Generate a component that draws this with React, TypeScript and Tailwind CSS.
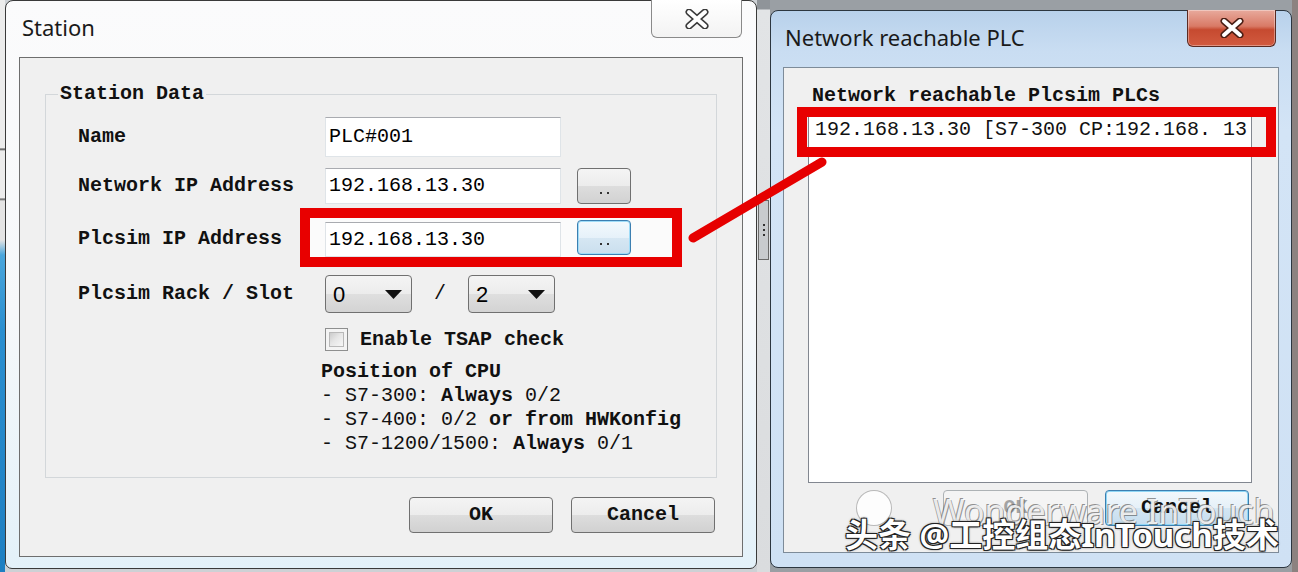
import React from 'react'

const mono = "font-['Liberation_Mono',monospace]"

function XGlyph({ dark }: { dark: string }) {
    return (
        <svg width="24" height="20" viewBox="0 0 24 20">
            <path d="M4 3 L20 17 M20 3 L4 17" stroke={dark} strokeWidth="7" strokeLinecap="round" />
            <path d="M4 3 L20 17 M20 3 L4 17" stroke="#ffffff" strokeWidth="4" strokeLinecap="round" />
        </svg>
    )
}

function TextBox({ value, h, mt = 0 }: { value: string; h: number; mt?: number }) {
    return (
        <div
            className="w-[236px] shrink-0 bg-white border border-[#dfe4e8] border-t-[#a9abb0] flex items-center pl-[3px] text-[20px] text-black"
            style={{ height: h, marginTop: mt }}
        >
            {value}
        </div>
    )
}

function DotsButton({ focused }: { focused?: boolean }) {
    return (
        <div
            className={
                focused
                    ? "ml-[16px] w-[54px] h-[35px] rounded-[4px] border border-[#3c7fb1] shadow-[inset_0_0_0_1px_#9fdcf8] bg-[linear-gradient(to_bottom,#f3f9fd_0%,#e6f1f9_50%,#d6e7f3_51%,#cadfee_100%)] flex items-end justify-center pb-[9px]"
                    : "ml-[16px] w-[54px] h-[36px] rounded-[4px] border border-[#707070] bg-[linear-gradient(to_bottom,#f4f4f4_0%,#ececec_50%,#dddddd_51%,#d2d2d2_100%)] flex items-end justify-center pb-[9px]"
            }
        >
            <span className="flex gap-[5px]">
                <span className="w-[2px] h-[2px] bg-[#333]" />
                <span className="w-[2px] h-[2px] bg-[#333]" />
            </span>
        </div>
    )
}

function Combo({ value }: { value: string }) {
    return (
        <div className="w-[87px] h-[38px] shrink-0 rounded-[4px] border border-[#707070] bg-[linear-gradient(to_bottom,#f4f4f4_0%,#ececec_50%,#dfdfdf_51%,#d3d3d3_100%)] flex items-center justify-between pl-[7px] pr-[9px]">
            <span className="font-['Liberation_Sans',sans-serif] text-[22px] text-black">{value}</span>
            <svg width="17" height="9" viewBox="0 0 17 9">
                <path d="M0 0 H17 L8.5 9 Z" fill="#111" />
            </svg>
        </div>
    )
}

function Label({ children }: { children: React.ReactNode }) {
    return <div className="w-[247px] shrink-0 self-center font-bold text-[20px] leading-[24px] text-[#111]">{children}</div>
}

function WinButton({ children, className }: { children: React.ReactNode; className: string }) {
    return (
        <div className={"h-[36px] rounded-[4px] flex items-center justify-center font-bold text-[20px] " + className}>
            {children}
        </div>
    )
}

export default function App() {
    return (
        <div className={"relative w-[1298px] h-[572px] overflow-hidden flex bg-[#cdd1d5] " + mono}>
            {/* desktop behind, left edge */}
            <div className="w-[5px] shrink-0 h-full bg-[linear-gradient(to_bottom,#ececec_0px,#ececec_148px,#444_149px,#ececec_151px,#ececec_198px,#555_199px,#e4e4e4_201px,#e4e4e4_240px,#4aa6dc_255px,#2b8fd0_330px,#1d7fc2_100%)]" />

            {/* Station dialog */}
            <div className="relative w-[752px] h-[569px] shrink-0 rounded-t-[8px] rounded-b-[7px] border border-[#3a3a3a] bg-[linear-gradient(to_right,rgba(110,205,240,0)_0px,rgba(110,205,240,0)_14px,rgba(110,205,240,0)_100%),linear-gradient(to_bottom,#fbfbfc_0%,#f6f8fa_55%,#e3f1f9_100%)] flex flex-col px-[13px] pb-[11px]">
                <div className="h-[56px] flex items-start justify-between">
                    <span className="mt-[12px] ml-[3px] font-['Noto_Sans',sans-serif] text-[22px] leading-[28px] text-[#1a1a1a]">Station</span>
                    <div className="-mt-px mr-px w-[91px] h-[38px] rounded-b-[6px] border border-t-0 border-[#8a8a8a] bg-[linear-gradient(to_bottom,#ffffff,#f3f3f3)] flex items-center justify-center">
                        <XGlyph dark="#3a3a3a" />
                    </div>
                </div>

                <div className="flex-1 border border-[#6e6e6e] bg-[#f0f0f0] flex flex-col">
                    <fieldset className="ml-[25px] mt-[24px] w-[672px] h-[396px] border border-[#d3d7da]">
                        <legend className="ml-[12px] px-[2px] font-bold text-[20px] leading-[24px] text-[#111]">Station Data</legend>
                        <div className="pl-[32px] flex flex-col">
                            <div className="mt-[11px] h-[40px] flex">
                                <Label>Name</Label>
                                <TextBox value="PLC#001" h={40} />
                            </div>
                            <div className="mt-[11px] h-[36px] flex">
                                <Label>Network IP Address</Label>
                                <TextBox value="192.168.13.30" h={36} />
                                <DotsButton />
                            </div>
                            <div className="relative isolate mt-[16px] h-[37px] flex items-start">
                                <div className="absolute left-[222px] -top-[12px] w-[382px] h-[59px] border-[10px] border-[#e80000] bg-[#fbfbfb] -z-10" />
                                <Label>Plcsim IP Address</Label>
                                <TextBox value="192.168.13.30" h={35} mt={2} />
                                <DotsButton focused />
                            </div>
                            <div className="mt-[18px] h-[38px] flex items-center">
                                <Label>Plcsim Rack / Slot</Label>
                                <Combo value="0" />
                                <span className="w-[56px] text-center text-[20px] text-[#111]">/</span>
                                <Combo value="2" />
                            </div>
                            <div className="mt-[15px] h-[23px] flex items-center pl-[247px]">
                                <div className="w-[23px] h-[23px] border border-[#8e8f8f] bg-[#f4f4f4] p-[3px]">
                                    <div className="w-full h-full border border-[#b9b9b9] bg-[linear-gradient(135deg,#cbcbcb_0%,#e6e6e6_45%,#f7f7f7_100%)]" />
                                </div>
                                <span className="ml-[12px] font-bold text-[20px] text-[#111]">Enable TSAP check</span>
                            </div>
                            <div className="ml-[243px] mt-[9px] text-[20px] leading-[24px] text-[#111] whitespace-pre">
                                <div className="font-bold">Position of CPU</div>
                                <div>- S7-300: <span className="font-bold">Always</span> 0/2</div>
                                <div>- S7-400: 0/2 <span className="font-bold">or from HWKonfig</span></div>
                                <div>- S7-1200/1500: <span className="font-bold">Always</span> 0/1</div>
                            </div>
                        </div>
                    </fieldset>

                    <div className="mt-[19px] pr-[27px] flex justify-end gap-[18px]">
                        <WinButton className="w-[144px] border border-[#707070] bg-[linear-gradient(to_bottom,#f4f4f4_0%,#ececec_50%,#dddddd_51%,#d1d1d1_100%)] text-[#111]">OK</WinButton>
                        <WinButton className="w-[144px] border border-[#707070] bg-[linear-gradient(to_bottom,#f4f4f4_0%,#ececec_50%,#dddddd_51%,#d1d1d1_100%)] text-[#111]">Cancel</WinButton>
                    </div>
                </div>
            </div>

            {/* gap between the two windows */}
            <div className="w-[13px] shrink-0 h-full bg-[linear-gradient(to_bottom,#8f9499_0px,#8f9499_9px,#e2e4e6_10px,#dadcde_100%)] flex flex-col items-center pt-[200px]">
                <div className="w-[11px] h-[60px] border border-[#6a6a6a] bg-[#c8cbce] flex flex-col items-center justify-center gap-[3px]">
                    <span className="w-[2px] h-[2px] bg-[#333]" />
                    <span className="w-[2px] h-[2px] bg-[#333]" />
                    <span className="w-[2px] h-[2px] bg-[#333]" />
                </div>
            </div>

            {/* Network reachable PLC dialog */}
            <div className="shrink-0 h-full bg-[#9a9fa4]">
                <div className="mt-[10px] w-[522px] h-[558px] rounded-[8px] border border-[#2c3640] bg-[linear-gradient(to_bottom,#b8d1eb_0%,#c9ddf2_40px,#d3e4f6_120px,#cfe1f4_100%)] flex flex-col px-[12px] pb-[14px]">
                    <div className="h-[56px] flex items-start justify-between">
                        <span className="mt-[12px] ml-[2px] font-['Noto_Sans',sans-serif] text-[22px] leading-[28px] text-[#1a1a1a]">Network reachable PLC</span>
                        <div className="-mt-px mr-[3px] w-[89px] h-[37px] rounded-b-[6px] border border-t-0 border-[#5b2a22] bg-[linear-gradient(to_bottom,#e8aa9d_0%,#d97a66_45%,#c64a30_55%,#d25b40_100%)] shadow-[inset_0_0_0_1px_rgba(255,255,255,0.35)] flex items-center justify-center">
                            <XGlyph dark="#4a1e14" />
                        </div>
                    </div>
                    <div className="flex-1 border border-[#7d8b99] bg-[#f0f0f0] flex flex-col pl-[24px]">
                        <div className="mt-[16px] ml-[4px] font-bold text-[20px] leading-[24px] text-[#111]">Network reachable Plcsim PLCs</div>
                        <div className="mt-[2px] w-[444px] h-[373px] bg-white border border-[#828790] overflow-hidden">
                            <div className="mt-[7px] pl-[6px] h-[24px] text-[20px] leading-[24px] text-[#111] whitespace-nowrap">192.168.13.30 [S7-300 CP:192.168. 13</div>
                        </div>
                        <div className="mt-[7px] pr-[29px] flex justify-end gap-[17px]">
                            <WinButton className="w-[145px] border border-[#adb2b5] bg-[#f4f4f4] text-[#a3a3a3]">OK</WinButton>
                            <WinButton className="w-[144px] border border-[#3c7fb1] shadow-[inset_0_0_0_1px_#8fd6f5] bg-[linear-gradient(to_bottom,#f2f8fc_0%,#e5f0f8_50%,#d3e6f3_51%,#c6ddee_100%)] text-[#111]">Cancel</WinButton>
                        </div>
                    </div>
                </div>
            </div>

            {/* desktop behind, right edge */}
            <div className="flex-1 h-full bg-[#8c8280]" />

            {/* annotation: red box on the list entry and the connecting stroke */}
            <div className="absolute left-[797px] top-[107px] w-[479px] h-[50px] border-[10px] border-[#e80000]" />
            <svg className="absolute left-0 top-0" width="1298" height="572" viewBox="0 0 1298 572">
                <line x1="693" y1="238" x2="822" y2="162" stroke="#e60000" strokeWidth="9" strokeLinecap="round" />
            </svg>

            {/* watermark */}
            <div className="absolute left-[856px] top-[490px] w-[36px] h-[36px] rounded-full bg-white/85 border border-[#8a8a8a]/60" />
            <div className="absolute left-[933px] top-[490px] font-['Noto_Sans',sans-serif] text-[34px] leading-[42px] text-white/85 [text-shadow:-1px_-1px_0_rgba(80,80,80,0.6),1px_1px_0_rgba(80,80,80,0.6)]">Wonderware InTouch</div>
            <div className="absolute left-[845px] top-[515px] font-['Noto_Sans','Noto_Sans_CJK_SC',sans-serif] font-bold text-[33px] leading-[40px] text-white [text-shadow:-1px_-1px_0_#222,1px_-1px_0_#222,-1px_1px_0_#222,1px_1px_0_#222,0_0_3px_#000]">
                头条 @工控组态InTouch技术
            </div>
        </div>
    )
}
